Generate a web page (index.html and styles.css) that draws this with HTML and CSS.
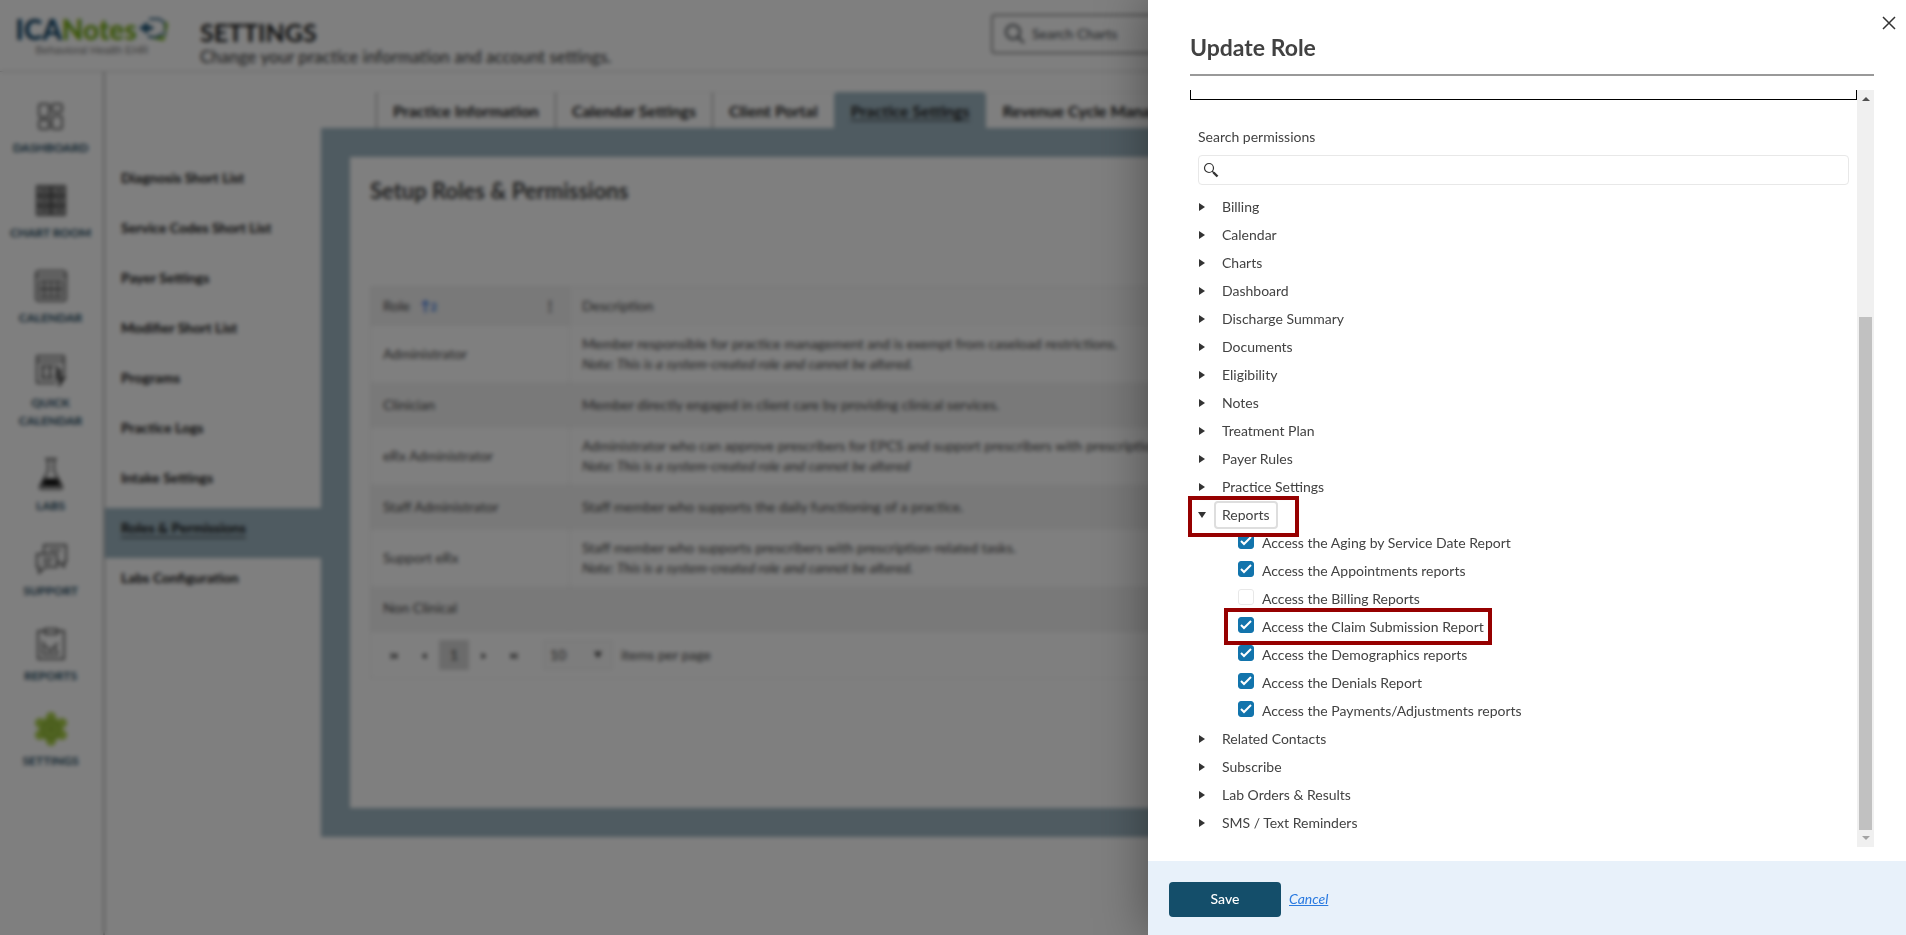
FILE: index.html
```
<!DOCTYPE html>
<html lang="en">
<head>
    <meta charset="UTF-8">
    <meta name="viewport" content="width=device-width, initial-scale=1.0">
    <title>ICANotes - Settings</title>
    <link rel="stylesheet" href="styles.css">
</head>
<body>

<div class="app">
    <header class="header">
        <a class="logo" href="#">
            <span class="logo-row">
                <span class="logo-text">ICA<span>Notes</span></span>
                <svg width="30" height="28" viewBox="0 0 30 28" fill="none">
                    <path d="M10 4h10l6 4v13" stroke="#1d5577" stroke-width="2"/>
                    <path d="M11 23l14 3 4-17-3-3v15l-8 1z" fill="#7ab51d"/>
                    <path d="M10 20v2h9l4-4" stroke="#1d5577" stroke-width="2"/>
                    <path d="M1 13h13M7 8v10" stroke="#1d5577" stroke-width="4"/>
                </svg>
            </span>
            <span class="logo-sub">Behavioral Health EHR</span>
        </a>
        <div class="page-title">
            <h1>SETTINGS</h1>
            <p>Change your practice information and account settings.</p>
        </div>
        <div class="chart-search">
            <svg width="22" height="22" viewBox="0 0 22 22" fill="none" stroke="#4b5055" stroke-width="2"><circle cx="9" cy="9" r="7"/><path d="M14 14l6 6"/></svg>
            <input type="text" placeholder="Search Charts" aria-label="Search Charts">
        </div>
    </header>

    <div class="main">
        <nav class="sidebar">
            <a href="#"><svg width="34" height="34" viewBox="0 0 34 34"><rect x="5" y="5" width="10" height="13" rx="2"/><rect x="18" y="5" width="10" height="8" rx="2"/><rect x="5" y="21" width="10" height="9" rx="2"/><rect x="18" y="17" width="10" height="13" rx="2"/></svg>Dashboard</a>
            <a href="#"><svg width="34" height="34" viewBox="0 0 34 34"><g fill="#aaa"><rect x="3" y="2" width="13" height="9"/><rect x="18" y="2" width="13" height="9"/><rect x="3" y="12" width="13" height="9"/><rect x="18" y="12" width="13" height="9"/><rect x="3" y="22" width="13" height="9"/><rect x="18" y="22" width="13" height="9"/></g><path d="M7 5l3 2 3-2M22 5l3 2 3-2M7 15l3 2 3-2M22 15l3 2 3-2M7 25l3 2 3-2M22 25l3 2 3-2"/></svg>Chart Room</a>
            <a href="#"><svg width="34" height="34" viewBox="0 0 34 34"><rect x="2" y="2" width="30" height="30" rx="3"/><path d="M2 7h30M6 12h22v16H6zM6 20h22"/><path d="M11 12v16M17 12v16M23 12v16" stroke-width="2"/></svg>Calendar</a>
            <a href="#"><svg width="34" height="34" viewBox="0 0 34 34"><path d="M22 29H3V2h27v19M3 7h27M7 12h13M7 24h12"/><path d="M9 12v13M16 12v13" stroke-width="2"/><path d="M22 11l5 8h-4l4 4h4l-6 9 1-7h-5" fill="#777"/></svg>Quick<br>Calendar</a>
            <a href="#"><svg width="34" height="34" viewBox="0 0 34 34"><path d="M11 2h12M14 2v12L6 29q-1 3 2 3h18q3 0 2-3l-8-15V2"/><path d="M11 22h12l3 7H8z" fill="#111"/></svg>Labs</a>
            <a href="#"><svg width="34" height="34" viewBox="0 0 34 34"><path d="M10 11V3h22v17h-2v5l-5-5h-3"/><path d="M3 12h20v13H11l-6 6v-6H3z"/><path d="M9 17h10M9 21h8M15 8h12"/></svg>Support</a>
            <a href="#"><svg width="34" height="34" viewBox="0 0 34 34"><path d="M11 4H4v28h26V4h-7M11 2h12v5H11z"/><path d="M9 14v13h16M11 18l5 6 4-4 4 5M24 16l-4 4"/></svg>Reports</a>
            <a href="#"><svg width="34" height="34" viewBox="0 0 34 34"><g fill="#a9cf48" stroke="none"><circle cx="17" cy="17" r="12"/><circle cx="17" cy="5" r="5"/><circle cx="28" cy="11" r="5"/><circle cx="28" cy="23" r="5"/><circle cx="17" cy="29" r="5"/><circle cx="6" cy="23" r="5"/><circle cx="6" cy="11" r="5"/></g><g stroke="#7da52c"><circle cx="17" cy="17" r="3"/><path d="M17 8l8 5v9l-8 5-8-5v-9z"/></g></svg>Settings</a>
        </nav>

        <nav class="submenu">
            <a href="#">Diagnosis Short List</a>
            <a href="#">Service Codes Short List</a>
            <a href="#">Payer Settings</a>
            <a href="#">Modifier Short List</a>
            <a href="#">Programs</a>
            <a href="#">Practice Logs</a>
            <a href="#">Intake Settings</a>
            <a href="#" class="active">Roles &amp; Permissions</a>
            <a href="#">Labs Configuration</a>
        </nav>

        <main class="content">
            <nav class="tabs">
                <a href="#">Practice Information</a>
                <a href="#">Calendar Settings</a>
                <a href="#">Client Portal</a>
                <a href="#" class="active">Practice Settings</a>
                <a href="#">Revenue Cycle Management</a>
            </nav>
            <section class="panel">
                <div class="panel-body">
                    <h2>Setup Roles &amp; Permissions</h2>
                    <table class="roles">
                        <thead>
                            <tr>
                                <th class="sorted"><div class="th-row">Role <span class="sort">↑<small>2</small></span><span class="kebab">⋮</span></div></th>
                                <th>Description</th>
                            </tr>
                        </thead>
                        <tbody>
                            <tr><td>Administrator</td><td>Member responsible for practice management and is exempt from caseload restrictions.<br><em>Note: This is a system-created role and cannot be altered.</em></td></tr>
                            <tr><td>Clinician</td><td>Member directly engaged in client care by providing clinical services.</td></tr>
                            <tr><td>eRx Administrator</td><td>Administrator who can approve prescribers for EPCS and support prescribers with prescription-related tasks.<br><em>Note: This is a system-created role and cannot be altered</em></td></tr>
                            <tr><td>Staff Administrator</td><td>Staff member who supports the daily functioning of a practice.</td></tr>
                            <tr><td>Support eRx</td><td>Staff member who supports prescribers with prescription-related tasks.<br><em>Note: This is a system-created role and cannot be altered.</em></td></tr>
                            <tr><td>Non Clinical</td><td></td></tr>
                        </tbody>
                    </table>
                    <div class="pager">
                        <button aria-label="First page"><svg width="8" height="8" viewBox="0 0 10 10"><path d="M1 1h2v8H1zM9 1v8L3 5z"/></svg></button>
                        <button aria-label="Previous page"><svg width="8" height="8" viewBox="0 0 10 10"><path d="M8 1v8L2 5z"/></svg></button>
                        <button class="current">1</button>
                        <button aria-label="Next page"><svg width="8" height="8" viewBox="0 0 10 10"><path d="M2 1v8l6-4z"/></svg></button>
                        <button aria-label="Last page"><svg width="8" height="8" viewBox="0 0 10 10"><path d="M7 1h2v8H7zM1 1v8l6-4z"/></svg></button>
                        <span class="page-size">
                            <select id="page-size"><option>10</option></select>
                            <svg width="8" height="8" viewBox="0 0 10 10"><path d="M0 1h10L5 9z"/></svg>
                        </span>
                        <label for="page-size">items per page</label>
                    </div>
                </div>
            </section>
        </main>
    </div>
</div>

<div class="overlay"></div>

<aside class="drawer" role="dialog" aria-labelledby="drawer-title">
    <button class="close" aria-label="Close">
        <svg width="14" height="14" viewBox="0 0 14 14" fill="none" stroke="#333" stroke-width="1.5"><path d="M1 1l12 12M13 1L1 13"/></svg>
    </button>
    <h2 id="drawer-title">Update Role</h2>

    <div class="scroll-area">
        <div class="form">
            <textarea class="role-text" aria-label="Role description"></textarea>
            <div class="permissions">
                <label for="search-permissions">Search permissions</label>
                <div class="search-box">
                    <svg width="16" height="16" viewBox="0 0 16 16" fill="none" stroke="#333"><circle cx="6" cy="6" r="4.500" stroke-width="1.2"/><path d="M9 9l2 2" stroke-width="1.2"/><path d="M10.500 10.500l4 4" stroke-width="2.4"/></svg>
                    <input type="text" id="search-permissions">
                </div>
                <ul class="tree">
                    <li><button class="node">Billing</button></li>
                    <li><button class="node">Calendar</button></li>
                    <li><button class="node">Charts</button></li>
                    <li><button class="node">Dashboard</button></li>
                    <li><button class="node">Discharge Summary</button></li>
                    <li><button class="node">Documents</button></li>
                    <li><button class="node">Eligibility</button></li>
                    <li><button class="node">Notes</button></li>
                    <li><button class="node">Treatment Plan</button></li>
                    <li><button class="node">Payer Rules</button></li>
                    <li><button class="node">Practice Settings</button></li>
                    <li class="marked-node">
                        <button class="node open" aria-expanded="true"><span class="focused">Reports</span></button>
                        <ul class="children">
                            <li><label><input type="checkbox" checked>Access the Aging by Service Date Report</label></li>
                            <li><label><input type="checkbox" checked>Access the Appointments reports</label></li>
                            <li><label><input type="checkbox">Access the Billing Reports</label></li>
                            <li><label class="marked"><input type="checkbox" checked>Access the Claim Submission Report</label></li>
                            <li><label><input type="checkbox" checked>Access the Demographics reports</label></li>
                            <li><label><input type="checkbox" checked>Access the Denials Report</label></li>
                            <li><label><input type="checkbox" checked>Access the Payments/Adjustments reports</label></li>
                        </ul>
                    </li>
                    <li><button class="node">Related Contacts</button></li>
                    <li><button class="node">Subscribe</button></li>
                    <li><button class="node">Lab Orders &amp; Results</button></li>
                    <li><button class="node">SMS / Text Reminders</button></li>
                </ul>
            </div>
        </div>
        <div class="scrollbar" aria-hidden="true">
            <span class="arrow-up"></span>
            <div class="track"><div class="thumb"></div></div>
            <span class="arrow-down"></span>
        </div>
    </div>

    <footer class="drawer-footer">
        <button class="save">Save</button>
        <a href="#">Cancel</a>
    </footer>
</aside>

</body>
</html>
```
FILE: styles.css
```
*, *::before, *::after {
    box-sizing: border-box;
}
body {
    margin: 0;
    height: 100vh;
    overflow: hidden;
    background-color: #fff;
    color: #424242;
    font-family: Lato, "Liberation Sans", sans-serif;
    font-size: 14px;
    line-height: 20px;
}
h1, h2, p, ul {
    margin: 0;
    padding: 0;
}
a {
    color: inherit;
    text-decoration: none;
}
button, input, select, textarea {
    font: inherit;
    color: inherit;
}
button {
    border: none;
    background: none;
    padding: 0;
    cursor: pointer;
}
svg {
    flex-shrink: 0;
}
.app {
    display: flex;
    flex-direction: column;
    height: 100vh;
}

/* Header */
.header {
    display: flex;
    align-items: flex-start;
    height: 72px;
    padding: 14px 16px 0;
    border-bottom: 1px solid #ccc;
}
.logo {
    display: flex;
    flex-direction: column;
    align-items: center;
    width: 152px;
    margin-right: 32px;
}
.logo-row {
    display: flex;
    align-items: center;
    gap: 2px;
    height: 30px;
}
.logo-text {
    font-size: 28px;
    font-weight: 900;
    color: #14486b;
}
.logo-text span {
    color: #76ad14;
}
.logo-sub {
    font-family: "Liberation Sans", sans-serif;
    font-size: 11px;
    line-height: 12px;
    color: #777;
}
.page-title h1 {
    font-size: 25px;
    line-height: 36px;
    color: #222;
}
.page-title p {
    font-size: 17px;
    line-height: 14px;
    font-weight: 500;
}
.chart-search {
    display: flex;
    align-items: center;
    gap: 6px;
    width: 480px;
    height: 40px;
    margin-left: auto;
    margin-right: 419px;
    padding: 0 11px;
    border: 2px solid #999;
    border-radius: 4px;
}
.chart-search input {
    border: none;
    background: none;
    flex: 1;
    padding: 0;
    font-weight: 500;
}
.chart-search input::placeholder {
    color: #4b5055;
}

/* Navigation */
.main {
    display: flex;
    flex: 1;
    min-height: 0;
}
.sidebar {
    display: flex;
    flex-direction: column;
    gap: 27px;
    width: 105px;
    padding: 27px 2px 0 0;
    border-right: 2px solid #bbb;
}
.sidebar a {
    display: flex;
    flex-direction: column;
    align-items: center;
    font-size: 12px;
    line-height: 18px;
    font-weight: bold;
    color: #1c465c;
    text-align: center;
    text-transform: uppercase;
}
.sidebar svg {
    margin-bottom: 6px;
    fill: none;
    stroke: #333;
    stroke-width: 1.5;
}
.submenu {
    width: 216px;
    padding-top: 86px;
}
.submenu a {
    display: block;
    height: 50px;
    padding: 10px 16px;
    font-weight: bold;
    color: #111;
}
.submenu .active {
    background-color: #9eb6c2;
    text-decoration: underline;
    text-underline-offset: 4px;
}
.content {
    flex: 1;
    min-width: 0;
    padding: 20px 16px 0 0;
}
.tabs {
    display: flex;
    padding-left: 55px;
}
.tabs a {
    padding: 8px 16px 7px;
    border-left: 1px solid #888;
    border-top: 1px solid #eee;
    font-size: 16px;
    font-weight: bold;
    color: #222;
    white-space: nowrap;
}
.tabs .active {
    background-color: #9eb6c2;
    border-color: #9eb6c2;
    border-radius: 4px 4px 0 0;
    text-decoration: underline;
    text-underline-offset: 3px;
}
.tabs .active + a {
    border-left-color: #fff;
}

/* Roles table */
.panel {
    padding: 29px;
    background-color: #9eb6c2;
}
.panel-body {
    min-height: 651px;
    padding: 20px;
    background-color: #fff;
}
.panel-body h2 {
    margin-bottom: 81px;
    font-size: 22px;
    line-height: 28px;
}
.roles {
    width: 100%;
    border-collapse: collapse;
    border: 1px solid #eee;
}
.roles th, .roles td {
    height: 46px;
    padding: 8px 12px;
    border-left: 1px solid #ebebeb;
    text-align: left;
    font-weight: normal;
}
.roles th {
    height: 39px;
    background-color: #fafafa;
}
.roles .sorted {
    width: 199px;
    background-color: #f2f2f2;
}
.roles tbody tr:nth-child(even) {
    background-color: #f3f3f3;
}
.th-row {
    display: flex;
    align-items: center;
}
.sort {
    margin-left: 10px;
    color: #2a6fe0;
    font-weight: bold;
}
.sort small {
    font-size: 11px;
}
.kebab {
    margin-left: auto;
    font-weight: bold;
}
.pager {
    display: flex;
    align-items: center;
    height: 47px;
    padding: 0 8px;
    border: 1px solid #eee;
    border-top: none;
}
.pager button {
    width: 30px;
    height: 30px;
}
.pager svg {
    fill: #444;
}
.pager .current {
    background-color: #d6d6d6;
}
.page-size {
    display: flex;
    align-items: center;
    width: 70px;
    height: 30px;
    margin: 0 8px 0 14px;
    padding: 0 10px 0 6px;
    border: 1px solid #eee;
    background-color: #fafafa;
}
.page-size select {
    appearance: none;
    flex: 1;
    min-width: 0;
    border: none;
    background: none;
}

/* Drawer */
.overlay {
    position: fixed;
    inset: 0;
    background-color: rgba(0, 0, 0, 0.5);
    backdrop-filter: blur(2px);
}
.drawer {
    position: fixed;
    top: 0;
    right: 0;
    bottom: 0;
    display: flex;
    flex-direction: column;
    width: 758px;
    max-width: 100%;
    background-color: #fff;
    box-shadow: 0 0 48px rgba(0, 0, 0, 0.4);
}
.close {
    position: absolute;
    top: 16px;
    right: 10px;
    display: flex;
}
.drawer h2 {
    margin: 0 32px 14px 42px;
    padding: 32px 0 12px;
    border-bottom: 2px solid #999;
    font-size: 23px;
    line-height: 30px;
}
.scroll-area {
    display: flex;
    flex: 1;
    min-height: 0;
    margin: 0 32px 14px 42px;
}
.form {
    flex: 1;
}
.role-text {
    display: block;
    width: 100%;
    height: 10px;
    padding: 0;
    border: 1px solid #000;
    border-top: none;
    resize: none;
}
.permissions {
    padding: 27px 8px 0;
}
.search-box {
    display: flex;
    align-items: center;
    height: 30px;
    margin: 8px 0;
    padding: 0 4px;
    border: 1px solid #e8e8e8;
    border-radius: 4px;
}
.search-box input {
    flex: 1;
    border: none;
    outline: none;
}
.tree, .children {
    list-style: none;
}
.node {
    display: flex;
    align-items: center;
    height: 28px;
}
.node::before {
    content: "";
    margin: 0 17px 0 1px;
    border-left: 6px solid #333;
    border-top: 4px solid transparent;
    border-bottom: 4px solid transparent;
}
.node.open::before {
    margin: 0 8px 0 0;
    border-top: 6px solid #333;
    border-bottom: none;
    border-left: 4px solid transparent;
    border-right: 4px solid transparent;
}
.focused {
    padding: 0 6px;
    border: 2px solid #dedede;
    border-radius: 4px;
    line-height: 24px;
}
.children {
    padding-left: 40px;
}
.children li {
    height: 28px;
}
.children label {
    display: inline-flex;
    align-items: center;
    gap: 8px;
    height: 28px;
}
.children input {
    appearance: none;
    width: 16px;
    height: 16px;
    margin: 0 0 4px;
    border: 1px solid #e8e8e8;
    border-radius: 3px;
}
.children input:checked {
    border-color: #1274ac;
    background: #1274ac url("data:image/svg+xml,%3Csvg xmlns='http://www.w3.org/2000/svg' viewBox='0 0 14 14'%3E%3Cpath d='M2 7l3 3 7-7' fill='none' stroke='white' stroke-width='2'/%3E%3C/svg%3E") center / 14px no-repeat;
}

/* Red frames around the items to point out */
.marked-node, .marked {
    position: relative;
}
.marked-node::after, .marked::after {
    content: "";
    position: absolute;
    border: 4px solid #960000;
    pointer-events: none;
}
.marked-node::after {
    top: -5px;
    left: -10px;
    width: 111px;
    height: 41px;
}
.marked::after {
    inset: -5px -8px -4px -14px;
}

/* Scrollbar */
.scrollbar {
    display: flex;
    flex-direction: column;
    align-items: center;
    width: 17px;
    padding: 7px 0;
    background-color: #f0f0f0;
}
.arrow-up, .arrow-down {
    border-left: 4px solid transparent;
    border-right: 4px solid transparent;
}
.arrow-up {
    border-bottom: 4px solid #505050;
}
.arrow-down {
    border-top: 4px solid #a3a3a3;
}
.track {
    display: flex;
    align-items: flex-end;
    flex: 1;
    width: 13px;
    margin: 6px 0;
}
.thumb {
    width: 100%;
    height: 71%;
    background-color: #c1c1c1;
}
.drawer-footer {
    display: flex;
    align-items: center;
    gap: 8px;
    height: 74px;
    padding: 2px 21px 0;
    background-color: #e8f1fa;
}
.save {
    width: 112px;
    height: 35px;
    border-radius: 4px;
    background-color: #144e6a;
    color: #fff;
    font-weight: 500;
}
.drawer-footer a {
    color: #2a7ae0;
    font-style: italic;
    text-decoration: underline;
}
```
